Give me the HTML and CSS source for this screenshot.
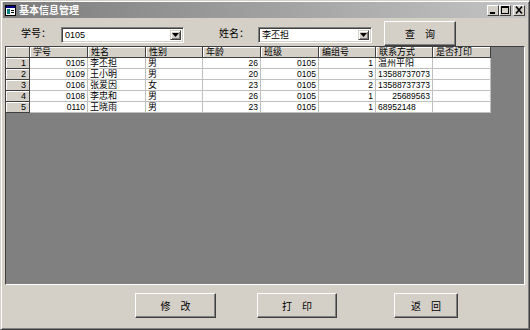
FILE: index.html
```html
<!DOCTYPE html>
<html lang="zh">
<head>
<meta charset="utf-8">
<link rel="stylesheet" href="styles.css">
</head>
<body>
<div class="window">
  <div class="titlebar">
    <svg class="app-icon" width="11" height="11" viewBox="0 0 11 11">
      <rect x="0.5" y="0.5" width="10" height="10" fill="#ffffff" stroke="#000"/>
      <rect x="1" y="1" width="9" height="2" fill="#000080"/>
      <rect x="2" y="4" width="3" height="5" fill="#008080"/>
      <rect x="6" y="5" width="3" height="1" fill="#000"/>
      <rect x="6" y="7" width="3" height="1" fill="#000"/>
    </svg>
    <span class="title">基本信息管理</span>
    <div class="caption-buttons">
      <span class="cbtn"><svg width="10" height="8" viewBox="0 0 10 8"><rect x="2" y="6" width="5" height="2" fill="#000"/></svg></span>
      <span class="cbtn"><svg width="10" height="8" viewBox="0 0 10 8"><rect x="1.5" y="0.5" width="7" height="7" fill="none" stroke="#000"/><rect x="1" y="0" width="8" height="2" fill="#000"/></svg></span>
      <span class="cbtn close"><svg width="10" height="8" viewBox="0 0 10 8"><path d="M2 0.5 L8 7.5 M8 0.5 L2 7.5" stroke="#000" stroke-width="1.6"/></svg></span>
    </div>
  </div>

  <div class="toolbar">
    <span class="label label-id">学号：</span>
    <div class="combo combo-id"><span class="combo-text n">0105</span><span class="drop"><svg width="7" height="4" viewBox="0 0 7 4"><path d="M0 0 H7 L3.5 4 Z" fill="#000"/></svg></span></div>
    <span class="label label-name">姓名：</span>
    <div class="combo combo-name"><span class="combo-text">李丕担</span><span class="drop"><svg width="7" height="4" viewBox="0 0 7 4"><path d="M0 0 H7 L3.5 4 Z" fill="#000"/></svg></span></div>
    <button class="btn btn-query">查　询</button>
  </div>

  <div class="grid-frame">
    <div class="grid">
      <div class="hc"></div><div class="hc">学号</div><div class="hc">姓名</div><div class="hc">性别</div><div class="hc">年龄</div><div class="hc">班级</div><div class="hc">编组号</div><div class="hc">联系方式</div><div class="hc">是否打印</div>

      <div class="hc rh">1</div><div class="c r n">0105</div><div class="c">李丕担</div><div class="c">男</div><div class="c r n">26</div><div class="c r n">0105</div><div class="c r n">1</div><div class="c">温州平阳</div><div class="c"></div>
      <div class="hc rh">2</div><div class="c r n">0109</div><div class="c">王小明</div><div class="c">男</div><div class="c r n">20</div><div class="c r n">0105</div><div class="c r n">3</div><div class="c r n">13588737073</div><div class="c"></div>
      <div class="hc rh">3</div><div class="c r n">0106</div><div class="c">张爱因</div><div class="c">女</div><div class="c r n">23</div><div class="c r n">0105</div><div class="c r n">2</div><div class="c r n">13588737373</div><div class="c"></div>
      <div class="hc rh">4</div><div class="c r n">0108</div><div class="c">李忠和</div><div class="c">男</div><div class="c r n">26</div><div class="c r n">0105</div><div class="c r n">1</div><div class="c r n">25689563</div><div class="c"></div>
      <div class="hc rh">5</div><div class="c r n">0110</div><div class="c">王晓雨</div><div class="c">男</div><div class="c r n">23</div><div class="c r n">0105</div><div class="c r n">1</div><div class="c n">68952148</div><div class="c"></div>
    </div>
  </div>

  <div class="footer">
    <button class="btn btn-edit">修　改</button>
    <button class="btn btn-print">打　印</button>
    <button class="btn btn-back">返　回</button>
  </div>
</div>
</body>
</html>
```

FILE: styles.css
```css
html, body {
  margin: 0;
  padding: 0;
  background: #d4d0c8;
}

body {
  font-family: "Liberation Sans", "Noto Sans CJK SC", sans-serif;
  font-size: 10px;
  color: #000;
}

.window {
  width: 530px;
  height: 330px;
  box-sizing: border-box;
  background: #d4d0c8;
  border: 1px solid;
  border-color: #d4d0c8 #404040 #404040 #d4d0c8;
  box-shadow: inset 1px 1px #ffffff, inset -1px -1px #808080;
  padding: 1px 2px 2px 2px;
  display: flex;
  flex-direction: column;
}

.titlebar {
  height: 16px;
  flex: none;
  display: flex;
  align-items: center;
  background: linear-gradient(to right, #7c7c7c, #c4c4c4);
  padding-left: 2px;
}

.app-icon {
  flex: none;
  display: block;
}

.title {
  margin-left: 3px;
  color: #ffffff;
  font-weight: bold;
  font-size: 10px;
  line-height: 16px;
  font-family: "Noto Sans CJK SC", sans-serif;
}

.caption-buttons {
  margin-left: auto;
  margin-right: 2px;
  display: flex;
  align-items: center;
}

.cbtn {
  width: 12px;
  height: 11px;
  box-sizing: border-box;
  background: #d4d0c8;
  border: 1px solid;
  border-color: #ffffff #404040 #404040 #ffffff;
  display: flex;
  align-items: center;
  justify-content: center;
}

.cbtn svg {
  display: block;
}

.cbtn.close {
  margin-left: 2px;
}

.toolbar {
  height: 28px;
  flex: none;
  display: flex;
  align-items: flex-start;
}

.label {
  margin-top: 9px;
  font-family: "Noto Sans CJK SC", sans-serif;
  font-size: 10px;
  line-height: 12px;
  white-space: nowrap;
}

.label-id {
  margin-left: 18px;
  width: 40px;
}

.label-name {
  margin-left: 35px;
  width: 39px;
}

.combo {
  margin-top: 9px;
  height: 16px;
  box-sizing: border-box;
  background: #ffffff;
  border: 1px solid;
  border-color: #808080 #ffffff #ffffff #808080;
  box-shadow: inset 1px 1px #404040, inset -1px -1px #d4d0c8;
  display: flex;
  align-items: center;
  padding: 2px;
}

.combo-id {
  width: 123px;
}

.combo-name {
  width: 114px;
}

.combo-text {
  flex: 1;
  padding-left: 1px;
  font-size: 9px;
  line-height: 10px;
  white-space: nowrap;
  overflow: hidden;
}

.drop {
  width: 11px;
  height: 10px;
  box-sizing: border-box;
  background: #d4d0c8;
  border: 1px solid;
  border-color: #d4d0c8 #404040 #404040 #d4d0c8;
  box-shadow: inset 1px 1px #ffffff, inset -1px -1px #808080;
  display: flex;
  align-items: center;
  justify-content: center;
}

.drop svg {
  display: block;
}

.btn {
  box-sizing: border-box;
  margin: 0;
  padding: 0;
  background: #d4d0c8;
  border: 1px solid;
  border-color: #ffffff #404040 #404040 #ffffff;
  box-shadow: inset -1px -1px #808080;
  font-family: "Noto Sans CJK SC", sans-serif;
  font-size: 10px;
  color: #000;
  height: 25px;
}

.btn-query {
  margin-top: 3px;
  margin-left: 12px;
  width: 72px;
  height: 25px;
}

.grid-frame {
  margin: 0 2px;
  height: 239px;
  flex: none;
  box-sizing: border-box;
  background: #808080;
  border: 1px solid;
  border-color: #404040 #ffffff #ffffff #404040;
  overflow: hidden;
}

.grid {
  display: grid;
  grid-template-columns: 24px 58px 58px 57px 58px 58px 57px 57px 58px;
  grid-auto-rows: 11px;
  width: 485px;
}

.hc, .c {
  box-sizing: border-box;
  font-size: 9px;
  line-height: 10px;
  white-space: nowrap;
}

.hc {
  background: #d4d0c8;
  border-right: 1px solid #404040;
  border-bottom: 1px solid #404040;
  box-shadow: inset 1px 1px #ffffff;
  padding-left: 3px;
  font-family: "Noto Sans CJK SC", sans-serif;
}

.hc.rh {
  text-align: right;
  padding-left: 0;
  padding-right: 3px;
  font-family: "Liberation Sans", sans-serif;
}

.c {
  background: #ffffff;
  border-right: 1px solid #c0c0c0;
  border-bottom: 1px solid #c0c0c0;
  padding-left: 2px;
}

.c.r {
  text-align: right;
  padding-left: 0;
  padding-right: 2px;
}

.n {
  font-family: "Liberation Sans", sans-serif;
  font-size: 8.5px;
}

.combo-text.n {
  font-size: 9px;
}

.footer {
  flex: 1;
  display: flex;
  align-items: flex-start;
  padding-top: 8px;
}

.btn-edit {
  margin-left: 132px;
  width: 81px;
}

.btn-print {
  margin-left: 41px;
  width: 80px;
}

.btn-back {
  margin-left: 57px;
  width: 64px;
}
```
